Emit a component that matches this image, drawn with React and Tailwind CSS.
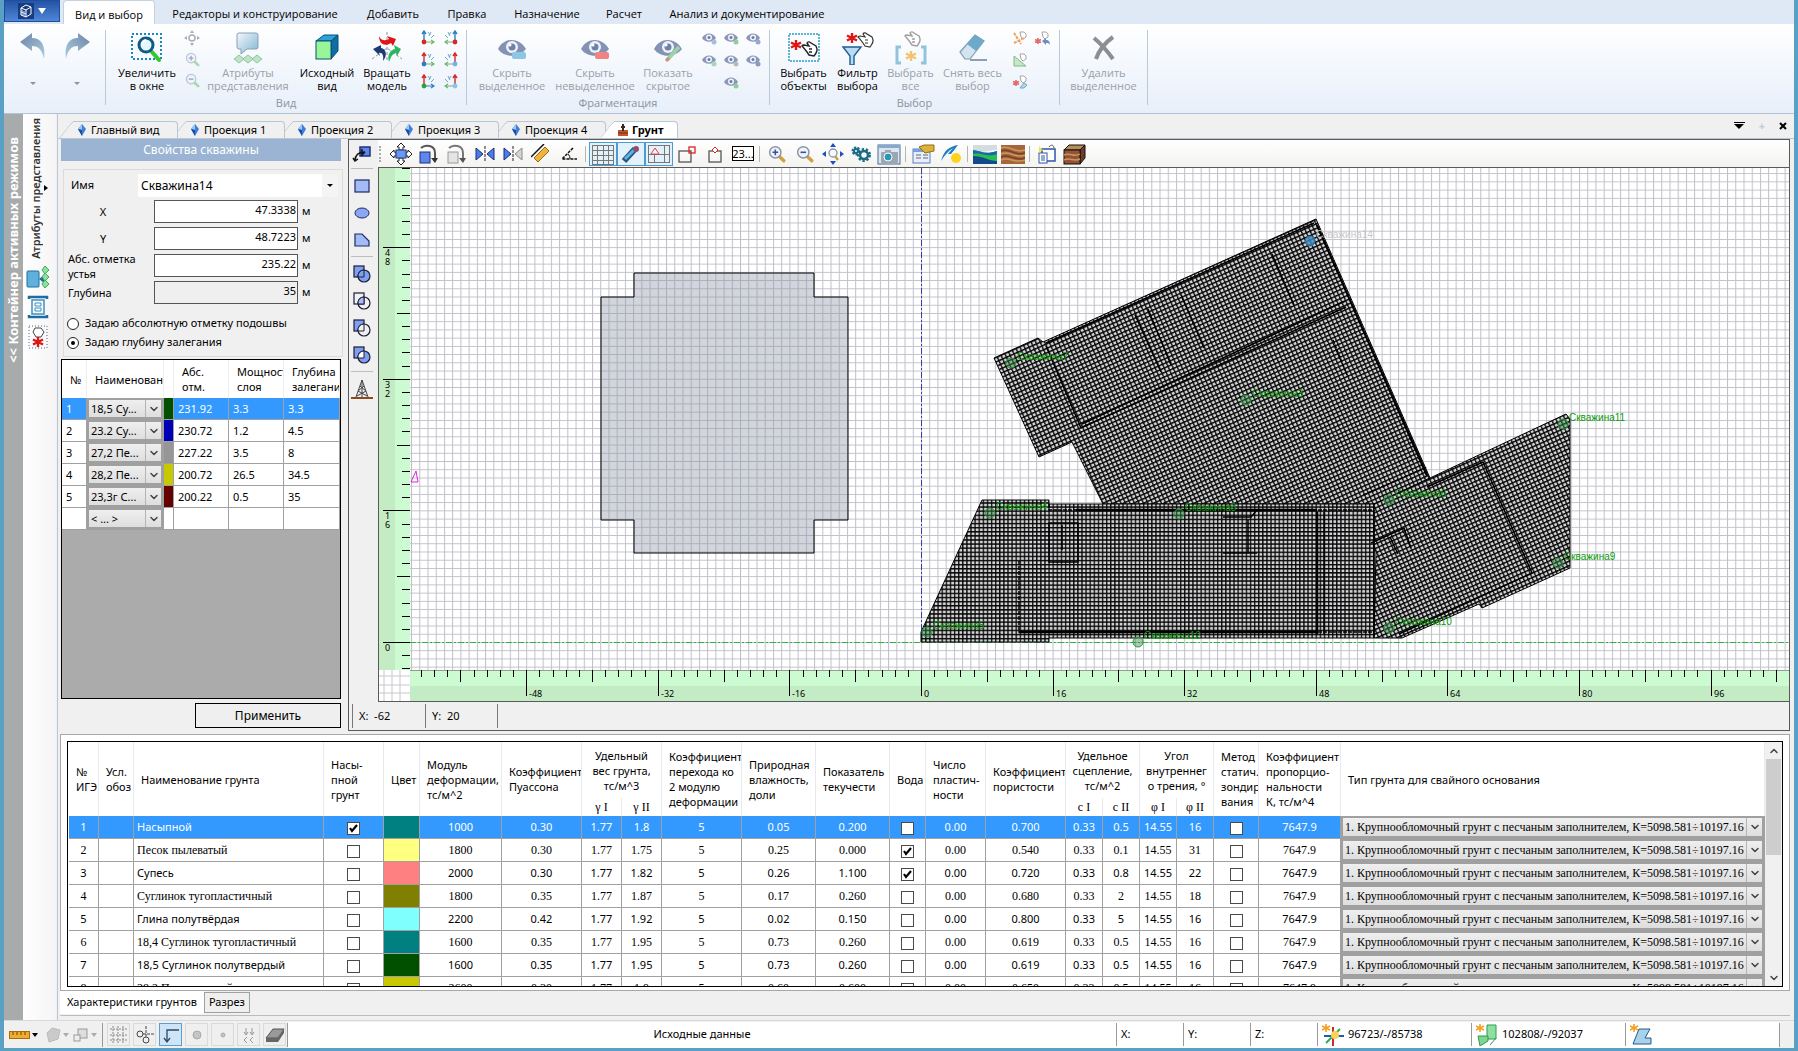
import { useState } from 'react';
import { ChevronDown, ChevronUp } from 'lucide-react';

const RIBBON_TABS = [
  { label: 'Вид и выбор', width: 'w-[92px]' },
  { label: 'Редакторы и конструирование', width: 'w-[200px]' },
  { label: 'Добавить', width: 'w-[76px]' },
  { label: 'Правка', width: 'w-[72px]' },
  { label: 'Назначение', width: 'w-[88px]' },
  { label: 'Расчет', width: 'w-[66px]' },
  { label: 'Анализ и документирование', width: 'w-[180px]' },
];

const DOC_TABS = [
  { name: 'Главный вид', skin: 'z-6 w-[119px]' },
  { name: 'Проекция 1', skin: 'z-5 w-[113px]' },
  { name: 'Проекция 2', skin: 'z-4 w-[113px]' },
  { name: 'Проекция 3', skin: 'z-3 w-[113px]' },
  { name: 'Проекция 4', skin: 'z-2 w-[113px]' },
  { name: 'Грунт', skin: 'z-7 w-[78px] font-bold', active: true },
];

const LAYERS = [
  { n: '1', name: '18,5 Су...', color: '#005000', mark: '231.92', power: '3.3', depth: '3.3' },
  { n: '2', name: '23.2 Су...', color: '#0000b4', mark: '230.72', power: '1.2', depth: '4.5' },
  { n: '3', name: '27,2 Пе...', color: '#969696', mark: '227.22', power: '3.5', depth: '8' },
  { n: '4', name: '28,2 Пе...', color: '#c8c800', mark: '200.72', power: '26.5', depth: '34.5' },
  { n: '5', name: '23,3г С...', color: '#640000', mark: '200.22', power: '0.5', depth: '35' },
  { n: '', name: '< ... >', color: '#ffffff', mark: '', power: '', depth: '' },
];

// name, насыпной, цвет, E, nu, γI, γII, k, W, IL, вода, Ip, e, cI, cII, φI, φII
const SOILS = [
  ['Насыпной', true, '#008080', '1000', '0.30', '1.77', '1.8', '5', '0.05', '0.200', false, '0.00', '0.700', '0.33', '0.5', '14.55', '16'],
  ['Песок пылеватый', false, '#ffff80', '1800', '0.30', '1.77', '1.75', '5', '0.25', '0.000', true, '0.00', '0.540', '0.33', '0.1', '14.55', '31'],
  ['Супесь', false, '#ff8080', '2000', '0.30', '1.77', '1.82', '5', '0.26', '1.100', true, '0.00', '0.720', '0.33', '0.8', '14.55', '22'],
  ['Суглинок тугопластичный', false, '#808000', '1800', '0.35', '1.77', '1.87', '5', '0.17', '0.260', false, '0.00', '0.680', '0.33', '2', '14.55', '18'],
  ['Глина полутвёрдая', false, '#80ffff', '2200', '0.42', '1.77', '1.92', '5', '0.02', '0.150', false, '0.00', '0.800', '0.33', '5', '14.55', '16'],
  ['18,4 Суглинок тугопластичный', false, '#008080', '1600', '0.35', '1.77', '1.95', '5', '0.73', '0.260', false, '0.00', '0.619', '0.33', '0.5', '14.55', '16'],
  ['18,5 Суглинок полутвердый', false, '#005000', '1600', '0.35', '1.77', '1.95', '5', '0.73', '0.260', false, '0.00', '0.619', '0.33', '0.5', '14.55', '16'],
  ['28,2 Песок мелкий', false, '#c8c800', '2600', '0.30', '1.77', '1.9', '5', '0.60', '0.600', false, '0.00', '0.650', '0.33', '0.5', '14.55', '16'],
];

const PILE_TYPE = '1. Крупнообломочный грунт с песчаным заполнителем, К=5098.581÷10197.16';

// plan coordinates: px from the 0;0 point, y down
const WELLS = [
  { x: 90, y: -279, label: 'Скважина7' },
  { x: 325, y: -242, label: 'Скважина3' },
  { x: 642, y: -218, label: 'Скважина11' },
  { x: 637, y: -79, label: 'Скважина9' },
  { x: 468, y: -142, label: 'Скважина6' },
  { x: 468, y: -14, label: 'Скважина10' },
  { x: 217, y: 0, label: 'Скважина12' },
  { x: 6, y: -10, label: 'Скважина5' },
  { x: 69, y: -129, label: 'Скважина4' },
  { x: 258, y: -128, label: 'Скважина8' },
];

/* ---------- icons ---------- */

const Svg = ({ s = 16, box, children, className = '' }) => (
  <svg width={s} height={s} viewBox={`0 0 ${box || s} ${box || s}`} fill="none" className={`shrink-0 ${className}`} aria-hidden="true">
    {children}
  </svg>
);

const Undo = ({ flip }) => (
  <svg width="28" height="28" viewBox="0 0 28 28" className={flip ? '-scale-x-100' : ''} aria-hidden="true">
    <defs>
      <linearGradient id="undo" x1="0" y1="0" x2="1" y2="1">
        <stop offset="0" stopColor="#6f83a8" />
        <stop offset="1" stopColor="#a9cfdf" />
      </linearGradient>
    </defs>
    <path d="M1 10 L13 1 V6 C22 6 27 13 25 27 C23 18 20 14 13 14 V19 Z" fill="url(#undo)" />
  </svg>
);

const ZoomWindow = () => (
  <Svg s={32}>
    <rect x="1" y="2" width="29" height="25" stroke="#1b86b8" strokeWidth="2" strokeDasharray="2 2" />
    <path d="M21 20 L28 28" stroke="#32c832" strokeWidth="4" strokeLinecap="round" />
    <circle cx="15" cy="13" r="7" fill="#e8f6ff" stroke="#0d5c86" strokeWidth="3" />
    <path d="M11 12 a5 5 0 0 1 4 -4" stroke="#fff" strokeWidth="2" />
  </Svg>
);

const ViewAttrs = () => (
  <Svg s={32}>
    <defs>
      <linearGradient id="attr" x1="0" y1="0" x2="1" y2="1">
        <stop offset="0" stopColor="#f2f8fc" />
        <stop offset="1" stopColor="#7fb4d2" />
      </linearGradient>
    </defs>
    <path d="M7 1 h17 a2 2 0 0 1 2 2 v12 a2 2 0 0 1 -2 2 h-9 l-6 5 v-5 h-2 a2 2 0 0 1 -2 -2 v-12 a2 2 0 0 1 2 -2z" fill="url(#attr)" stroke="#8a9fb8" />
    <path d="M2 27 l5 -4 5 4 -5 4z M11 27 l5 -4 5 4 -5 4z M20 27 l5 -4 5 4 -5 4z" fill="#bfe3c8" stroke="#8cc79c" />
  </Svg>
);

const HomeView = () => (
  <Svg s={32}>
    <path d="M5 9 L13 3 H27 L20 9z" fill="#2ba3d8" stroke="#0b4f77" />
    <path d="M20 9 L27 3 V19 L20 27z" fill="#0d6ea5" stroke="#0b4f77" />
    <rect x="5" y="9" width="15" height="18" fill="#98f598" stroke="#0b4f77" />
  </Svg>
);

const RotateModel = () => (
  <Svg s={32}>
    <path d="M16 0 V30 M1 27 L16 16 L31 27" stroke="#8a93a6" strokeDasharray="3 2" />
    <path d="M8 4 C10 9 14 9 18 7 L16 4 L25 7 L22 14 L20 11 C14 15 8 12 8 4z" fill="#e01515" />
    <path d="M12 29 C13 23 11 20 8 21 L9 24 L2 17 L10 13 L10 16 C15 17 17 23 12 29z" fill="#1c3a70" />
    <path d="M18 30 C16 23 19 18 24 17 L23 13 L30 17 L26 24 L25 21 C21 22 20 25 18 30z" fill="#2db560" />
  </Svg>
);

const EyeGlyph = ({ children }) => (
  <Svg s={32}>
    <path d="M2 17 C8 5 23 5 30 17 C23 26 8 26 2 17z" fill="#8492b5" />
    <circle cx="16" cy="15" r="6" fill="#eef3fa" />
    <circle cx="16" cy="15" r="3.5" fill="#7081a8" />
    <circle cx="14" cy="13" r="1.5" fill="#fff" />
    {children}
  </Svg>
);

const Star = ({ x, y, r = 5, color }) => (
  <path
    d={`M${x} ${y - r} V${y + r} M${x - r} ${y - r / 2} L${x + r} ${y + r / 2} M${x - r} ${y + r / 2} L${x + r} ${y - r / 2}`}
    stroke={color}
    strokeWidth={r > 4 ? 2.4 : 1.6}
  />
);

const HAND = 'M1 5 C1 4 2 4 3 4 L8 5 L6 2 C7 0 9 1 10 2 L15 5 C17 9 16 11 13 15 L8 14 L6 11 L2 6z M8 8 h3 M8 11 h3';

const SelectObjects = () => (
  <Svg s={32}>
    <rect x="1" y="2" width="30" height="27" stroke="#2b9fc4" strokeWidth="1.5" strokeDasharray="2 1" />
    <Star x={8} y={13} color="#e01515" />
    <path d={HAND} transform="translate(13 9)" fill="#fff" stroke="#222" strokeWidth="1.4" />
  </Svg>
);

const FilterSelect = () => (
  <Svg s={34}>
    <Star x={11} y={7} color="#e01515" />
    <path d={HAND} transform="translate(16 1)" fill="#fff" stroke="#333" strokeWidth="1.2" />
    <path d="M2 16 H20 L13 25 V34 H9 V25z" fill="#b9dcf5" stroke="#1d5c94" strokeWidth="1.4" />
  </Svg>
);

const SelectAll = () => (
  <Svg s={34}>
    <path d="M7 16 H3 V32 H7 M27 16 H31 V32 H27" stroke="#8fc4dc" strokeWidth="3" />
    <Star x={17} y={25} color="#f3c470" />
    <path d={HAND} transform="translate(10 0)" fill="#fff" stroke="#a0a0a0" strokeWidth="1.4" />
  </Svg>
);

const Eraser = () => (
  <Svg s={32}>
    <path d="M3 20 L18 3 L27 9 L13 27 H8z" fill="#d3e3ef" stroke="#7f9db5" strokeWidth="1.2" />
    <path d="M10 12 L18 3 L27 9 L19 19z" fill="#6ca9cb" />
    <path d="M13 28 H30" stroke="#8ca0b5" strokeWidth="2" />
  </Svg>
);

const DeleteX = () => (
  <Svg s={32}>
    <path d="M6 6 C12 11 20 20 25 27 M25 5 C18 10 11 18 8 27" stroke="#8e8e92" strokeWidth="4" />
  </Svg>
);

const Axes = ({ a, b, dot, right }) => (
  <Svg s={16}>
    <g transform={right ? 'translate(16 0) scale(-1 1)' : undefined}>
      <path d="M4 12 V2 M2 4 L4 1 L6 4" stroke={a} strokeWidth="1.4" />
      <path d="M4 12 H13 M11 10 L14 12 L11 14" stroke={b} strokeWidth="1.2" />
      <circle cx="4" cy="12" r="2.4" fill={dot} />
      <path d="M8 2 L10 5 M11 2 L9 6 M11 8 L14 5" stroke="#5b9fc4" strokeWidth=".9" />
    </g>
  </Svg>
);

const SmallEye = ({ tint }) => (
  <Svg s={16}>
    <path d="M1 8 C4 2 12 2 15 8 C12 13 4 13 1 8z" fill="#8b98ba" />
    <circle cx="8" cy="7.500" r="3" fill="#f0f4fa" />
    <circle cx="8" cy="7.500" r="1.500" fill="#6c7da5" />
    <circle cx="13" cy="12" r="2.500" fill={tint} />
  </Svg>
);

const SmallPick = ({ kind }) => (
  <Svg s={16}>
    <path d="M8 2 h4 l2 2 v3 l-3 2 -2 -2z" fill="#fff" stroke="#a5a5a5" />
    {kind === 'link' && <path d="M2 3 L9 14 M2 13 L12 8" stroke="#f0a060" strokeWidth="2" strokeDasharray="3 1" />}
    {kind === 'back' && (
      <>
        <Star x={4} y={11} r={3} color="#e66a6a" />
        <path d="M8 11 l4 -3 v2 c3 0 4 2 4 5 c-1 -2 -2 -2 -4 -2 v2z" fill="#6f8cc0" />
      </>
    )}
    {kind === 'tri' && <path d="M2 4 V14 H14z" fill="#c6e8c6" stroke="#7fb98a" />}
    {kind === 'clear' && (
      <>
        <Star x={4} y={9} r={3} color="#e66a6a" />
        <path d="M8 14 l4 -5 3 2 -3 3z" stroke="#6ca9cb" fill="#b5d8ea" />
      </>
    )}
  </Svg>
);

const Magnifier = ({ sign, faded, handle = '#d2a03c' }) => (
  <Svg s={faded ? 15 : 18} box={16} className={faded ? 'opacity-50' : ''}>
    <path d="M9.500 9.500 L14 14" stroke={handle} strokeWidth="3" strokeLinecap="round" />
    <circle cx="6.500" cy="6.500" r="5" fill="#eef4fb" stroke="#8b95a5" strokeWidth="1.300" />
    <path d={sign === '+' ? 'M4 6.5 H9 M6.500 4 V9' : 'M4 6.5 H9'} stroke="#3b4f9a" strokeWidth="1.400" />
  </Svg>
);

const PanArrows = ({ color }) => (
  <Svg s={24} box={24}>
    <path d="M12 1 l3 4 h-6z M12 23 l3 -4 h-6z M1 12 l4 -3 v6z M23 12 l-4 -3 v6z" fill={color} />
    <path d="M14 14 L17 18" stroke="#d2a03c" strokeWidth="2.500" />
    <circle cx="12" cy="11" r="4" fill="#f4f8fc" stroke="#8b95a5" strokeWidth="1.300" />
  </Svg>
);

const Gem = () => (
  <svg width="10" height="12" viewBox="0 0 10 12" className="shrink-0" aria-hidden="true">
    <path d="M1 5 L5 0 L9 5 L5 12z" fill="#3f7fd8" />
    <path d="M1 5 L5 0 V6z" fill="#9cc8f5" />
    <path d="M1 5 L5 6 V12z" fill="#1b4aa8" />
  </svg>
);

const BoolOp = ({ sq, ci, both }) => (
  <Svg s={20}>
    <rect x="2" y="2" width="10" height="11" fill={sq} stroke="#1c1c3a" strokeWidth="1.200" />
    <circle cx="12" cy="12" r="6" fill={ci} stroke="#1c1c3a" strokeWidth="1.200" />
    <path d="M12 6 V13 H6 A6 6 0 0 1 12 6z" fill={both} stroke="#1c1c3a" />
  </Svg>
);

const TOOLBAR = [
  [
    ['Переместить', <Svg s={24}><path d="M12 1 l4 4 h-2 v3 h-4 v-3 h-2z M12 23 l4 -4 h-2 v-3 h-4 v3 h-2z M1 12 l4 -4 v2 h2 v4 h-2 v2z M23 12 l-4 -4 v2 h-2 v4 h2 v2z" fill="#fff" stroke="#222" /><rect x="7" y="8" width="10" height="8" fill="#6b97ef" stroke="#23388a" /></Svg>],
    ['Повернуть', <Svg s={20}><rect x="1" y="8" width="10" height="11" fill="#5f86ea" stroke="#1d2f7a" /><path d="M2 4 C6 0 16 1 16 9 V15" stroke="#555" strokeWidth="2" /><path d="M12 14 h7 l-3 5z" fill="#333" /></Svg>],
    ['Повернуть копию', <Svg s={20}><rect x="1" y="8" width="10" height="11" fill="#e4e4e4" stroke="#9a9a9a" /><path d="M2 4 C6 0 16 1 16 9 V15" stroke="#777" strokeWidth="2" /><path d="M12 14 h7 l-3 5z" fill="#555" /></Svg>],
    ['Отразить', <Svg s={20}><path d="M1 4 L8 10 L1 16z M19 4 L12 10 L19 16z" fill="#4a7de8" stroke="#1b2c80" /><path d="M10 2 V18" stroke="#222" strokeDasharray="3 1" /></Svg>],
    ['Отразить копию', <Svg s={20}><path d="M1 4 L8 10 L1 16z" fill="#4a7de8" stroke="#1b2c80" /><path d="M19 4 L12 10 L19 16z" fill="#d5d5d5" stroke="#8a8a8a" /><path d="M10 2 V18" stroke="#222" strokeDasharray="3 1" /></Svg>],
    ['Измерить', <Svg s={20}><path d="M3 14 L14 3 L18 7 L7 18z" fill="#efb43e" stroke="#9b6a13" /><path d="M0 13 L13 0" stroke="#111" strokeWidth="1.500" /></Svg>],
    ['Угол', <Svg s={20}><path d="M14 4 L3 15 H18" stroke="#111" strokeWidth="1.500" strokeDasharray="3 1" /><path d="M9 10 a6 6 0 0 1 2 5" stroke="#111" /></Svg>],
  ],
  [
    ['Сетка', <Svg s={24}><path d="M1 3.500 H23 M1 8.500 H23 M1 13.500 H23 M1 18.500 H23 M1 22.500 H23 M1.500 3 V23 M6.500 3 V23 M12.500 3 V23 M17.500 3 V23 M22.500 3 V23" stroke="#777" /></Svg>, true],
    ['Кисть', <Svg s={20}><path d="M3 17 L14 5" stroke="#27567d" strokeWidth="6" /><path d="M4 15 L14 5" stroke="#57b4e6" strokeWidth="3" /><circle cx="15" cy="5" r="3" fill="#8e4f74" /></Svg>, true],
    ['Ось сетки', <Svg s={24}><path d="M1 3.500 H23 M1 12.500 H23 M1 20.500 H23 M1.500 3 V21 M17.500 3 V21 M22.500 3 V21 M7.500 13 V21" stroke="#777" /><path d="M4 12 L8 6 L12 12z" stroke="#e04040" fill="#fff" /></Svg>, true],
    ['Угловая привязка', <Svg s={20}><rect x="2" y="7" width="12" height="11" stroke="#555" strokeWidth="1.300" /><rect x="12" y="3" width="6" height="6" stroke="#e02020" strokeWidth="1.300" /></Svg>],
    ['Средняя точка', <Svg s={20}><rect x="4" y="7" width="12" height="11" stroke="#555" strokeWidth="1.300" /><path d="M10 3 l3 3 -3 3 -3 -3z" fill="#fff" stroke="#e02020" /></Svg>],
    ['Число', <span className="flex h-[15px] w-[22px] items-center justify-center border border-black bg-white text-[11px] leading-none">23...</span>],
  ],
  [
    ['Приблизить', <Magnifier sign="+" />],
    ['Отдалить', <Magnifier sign="-" />],
    ['Показать все', <PanArrows color="#1e4fc4" />],
    ['Настройки', <Svg s={22}><circle cx="6" cy="8" r="3" stroke="#1c6a86" strokeWidth="3" strokeDasharray="2 1" /><circle cx="6" cy="8" r="2" stroke="#1c6a86" strokeWidth="2" /><circle cx="14" cy="12" r="5" stroke="#1c6a86" strokeWidth="4" strokeDasharray="2 1.500" /><circle cx="14" cy="12" r="4" stroke="#1c6a86" strokeWidth="2.500" /></Svg>],
    ['Снимок', <Svg s={24}><rect x="1" y="3" width="22" height="19" fill="#dbe6f2" stroke="#4a6a94" /><rect x="1" y="3" width="22" height="3" fill="#86a9d2" /><rect x="4" y="10" width="17" height="11" rx="1" fill="#9aa6b0" /><rect x="8" y="8" width="6" height="3" fill="#9aa6b0" /><circle cx="11" cy="15" r="4" fill="#2b97b5" stroke="#fff" /></Svg>],
  ],
  [
    ['Свойства', <Svg s={24}><rect x="2" y="7" width="17" height="14" fill="#e8effb" stroke="#5b7fc4" /><rect x="2" y="7" width="17" height="3" fill="#7aa0e0" /><path d="M5 13 h5 M5 16 h5 M12 13 h5 M12 16 h5" stroke="#667" /><path d="M8 5 L13 3 H23 V9 L14 11z" fill="#dcb23a" stroke="#8e6f14" /></Svg>],
    ['Заливка', <Svg s={22}><path d="M1 18 C4 8 8 4 18 2 L11 11 L8 11 L13 5 C8 8 5 12 1 18z" fill="#1d7cc4" /><circle cx="16" cy="15" r="5" fill="#ffd21e" /></Svg>],
  ],
  [
    ['Рельеф', <Svg s={24}><rect y="3" width="24" height="19" fill="#fff" /><path d="M0 3 h24 v5 C16 8 12 12 0 8z" fill="#d4dce2" /><path d="M0 8 C8 9 12 13 24 9 V22 H0z" fill="#2bbd4e" /><path d="M0 8 C8 9 12 13 24 9 V12 C14 16 9 10 0 12z" fill="#1768b0" /><path d="M0 14 C10 14 16 19 24 19 V22 H0z" fill="#124a8e" /></Svg>],
    ['Разрез', <Svg s={24}><rect y="3" width="24" height="19" fill="#a6653d" /><path d="M0 6 C8 2 14 12 24 8 M0 12 C8 8 14 17 24 13 M0 18 C8 14 14 22 24 18" stroke="#c79c58" strokeWidth="1.500" /><path d="M0 9 C8 5 14 15 24 11 M0 15 C8 11 14 20 24 16" stroke="#7c3d2c" strokeWidth="1.500" /></Svg>],
  ],
  [
    ['Копировать', <Svg s={20}><rect x="5" y="5" width="13" height="12" fill="#fff" stroke="#2c55a8" strokeWidth="1.500" /><rect x="2" y="9" width="8" height="10" fill="#fff" stroke="#2c55a8" /><path d="M4 12 h4 M4 14 h4 M4 16 h4" stroke="#2c55a8" /><path d="M2 2 l2 3 3 1 -3 1 -2 2z" fill="#f2df3a" /><path d="M12 3 C14 0 17 1 17 4" stroke="#556" /></Svg>],
    ['Массив', <Svg s={24}><path d="M1 8 L6 3 H22 L17 8z" fill="#b78d54" stroke="#111" /><path d="M17 8 L22 3 V16 L17 22z" fill="#6f3a28" stroke="#111" /><rect x="1" y="8" width="16" height="14" fill="#965038" stroke="#111" /><path d="M1 13 C7 10 11 16 17 12 M1 18 C7 15 11 20 17 17" stroke="#c79858" strokeWidth="1.500" /></Svg>],
  ],
];

const SIDE_TOOLS = [
  [
    ['Прямоугольник', <Svg s={20}><rect x="3" y="4" width="14" height="12" fill="#a3bbf7" stroke="#1c2a66" strokeWidth="1.200" /></Svg>],
    ['Эллипс', <Svg s={20}><ellipse cx="10" cy="10" rx="7" ry="5" fill="#8ba7f3" stroke="#1c2a66" /></Svg>],
    ['Многоугольник', <Svg s={20}><path d="M3 4 H10 L17 11 V16 H3z" fill="#a3bbf7" stroke="#1c2a66" strokeWidth="1.200" /></Svg>],
  ],
  [
    ['Объединить', <BoolOp sq="#7f9ff0" ci="#7f9ff0" both="#7f9ff0" />],
    ['Пересечь', <BoolOp sq="none" ci="none" both="#a9bdf5" />],
    ['Вычесть', <BoolOp sq="#7f9ff0" ci="#f0f0f0" both="#f0f0f0" />],
    ['Исключить', <BoolOp sq="#7f9ff0" ci="#7f9ff0" both="#ffffff" />],
  ],
  [['Скважина', <Svg s={22}><path d="M11 2 L5 19 M11 2 L17 19 M9 8 L15 13 M13 8 L7 13 M7 13 L16 18 M15 13 L6 18 M11 2 V19" stroke="#444" /><path d="M0 20 H22" stroke="#8a4b23" strokeWidth="2" /></Svg>]],
];

/* ---------- small controls ---------- */

const Check = ({ label, defaultChecked }) => (
  <span className="relative inline-flex align-middle">
    <input type="checkbox" aria-label={label} defaultChecked={defaultChecked} className="peer size-[13px] appearance-none border border-[#4a4a4a] bg-white" />
    <svg viewBox="0 0 13 13" className="pointer-events-none absolute inset-0 hidden size-[13px] peer-checked:block" aria-hidden="true">
      <path d="M3 6 L5 9 L10 3" fill="none" stroke="#000" strokeWidth="2.200" />
    </svg>
  </span>
);

const GridSelect = ({ label, value, className = '' }) => (
  <span className="relative flex size-full border-2 border-[#a0a0a0] bg-linear-to-b from-[#efefef] to-[#dedede]">
    <select aria-label={label} className={`size-full appearance-none overflow-hidden bg-transparent pr-4 pl-[2px] leading-[16px] text-black outline-none ${className}`}>
      <option>{value}</option>
    </select>
    <span className="pointer-events-none absolute inset-y-0 right-0 flex w-4 items-center justify-center border-l border-[#b4b4b4]">
      <ChevronDown size={12} strokeWidth={3} color="#444" />
    </span>
  </span>
);

/* ---------- ribbon ---------- */

const BigButton = ({ icon, lines, width, disabled }) => (
  <button type="button" disabled={disabled} className={`flex shrink-0 flex-col items-center ${width} ${disabled ? 'text-[#9a9fa8]' : 'text-black'}`}>
    <span className="flex h-9 items-center">{icon}</span>
    <span className="text-[11px] leading-[13px] whitespace-pre">{lines}</span>
  </button>
);

const RibbonGroup = ({ title, width, children }) => (
  <div role="group" aria-label={title || undefined} className={`flex shrink-0 flex-col ${width}`}>
    <div className="mt-[6px] flex h-[75px] flex-col justify-between border-r border-[#bcc9d8]">
      <div className="flex items-start justify-center">{children}</div>
      <div className="h-1 text-center text-[11px] leading-[4px] text-[#8d939d]">{title}</div>
    </div>
  </div>
);

const IconGrid = ({ cols, label, children }) => (
  <div aria-label={label} className={`grid shrink-0 ${cols} content-start justify-items-center gap-y-[6px]`}>{children}</div>
);

const RED = '#d62828';

const Ribbon = () => (
  <div className="flex h-[90px] shrink-0 overflow-hidden border-b border-[#b4c4d4] bg-linear-to-b from-white to-[#e7effa] font-['Open_Sans','Noto_Sans',sans-serif]">
    <RibbonGroup title="" width="w-[102px]">
      {['Отменить', 'Повторить'].map((name, i) => (
        <button key={name} type="button" disabled aria-label={name} className="flex w-11 flex-col items-center gap-[22px] pt-[2px]">
          <Undo flip={i === 1} />
          <span className="border-x-[3px] border-t-[3px] border-x-transparent border-t-[#8f949c]" />
        </button>
      ))}
    </RibbonGroup>
    <RibbonGroup title="Вид" width="w-[361px]">
      <BigButton icon={<ZoomWindow />} lines={'Увеличить\nв окне'} width="w-[74px]" />
      <IconGrid cols="grid-cols-1" label="Масштаб">
        <Svg s={16}><path d="M8 0 l2 3 h-4z M8 16 l2 -3 h-4z M0 8 l3 -2 v4z M16 8 l-3 -2 v4z" fill="#a9aeb8" /><circle cx="8" cy="8" r="3" stroke="#a9aeb8" strokeWidth="1.500" /></Svg>
        <Magnifier sign="+" faded handle="#5fc45f" />
        <Magnifier sign="-" faded handle="#5fc45f" />
      </IconGrid>
      <BigButton icon={<ViewAttrs />} lines={'Атрибуты\nпредставления'} width="w-[96px]" disabled />
      <BigButton icon={<HomeView />} lines={'Исходный\nвид'} width="w-[62px]" />
      <BigButton icon={<RotateModel />} lines={'Вращать\nмодель'} width="w-[58px]" />
      <IconGrid cols="grid-cols-[23px_23px]" label="Виды">
        <Axes a="#2b7fc4" b="#6cb86c" dot={RED} />
        <Axes a="#2b7fc4" b="#6cb86c" dot={RED} right />
        <Axes a={RED} b="#6cb86c" dot="#2b7fc4" />
        <Axes a={RED} b="#6cb86c" dot="#6fb4e8" right />
        <Axes a={RED} b="#2b7fc4" dot="#2fa03c" />
        <Axes a={RED} b="#6cb86c" dot="#8cc4ee" right />
      </IconGrid>
    </RibbonGroup>
    <RibbonGroup title="Фрагментация" width="w-[303px]">
      <BigButton icon={<EyeGlyph><rect x="16" y="20" width="14" height="7" rx="2" fill="#8fc6e6" /></EyeGlyph>} lines={'Скрыть\nвыделенное'} width="w-[80px]" disabled />
      <BigButton icon={<EyeGlyph><rect x="16" y="20" width="14" height="7" rx="2" fill="#ef8484" /></EyeGlyph>} lines={'Скрыть\nневыделенное'} width="w-[86px]" disabled />
      <BigButton icon={<EyeGlyph><path d="M15 28 L27 15" stroke="#9bd3a5" strokeWidth="4" /><path d="M14 29 l3 -3" stroke="#d88a7a" strokeWidth="3" /></EyeGlyph>} lines={'Показать\nскрытое'} width="w-[60px]" disabled />
      <IconGrid cols="grid-cols-[22px_22px_22px]" label="Фрагменты">
        <SmallEye tint="#a8bfdc" /><SmallEye tint="#8fd09a" /><SmallEye tint="#9aa8d0" />
        <SmallEye tint="#a8d8b8" /><SmallEye tint="#b8bcb8" /><SmallEye tint="#8a9cc0" />
        <span /><SmallEye tint="#8fd09a" />
      </IconGrid>
    </RibbonGroup>
    <RibbonGroup title="Выбор" width="w-[290px]">
      <BigButton icon={<SelectObjects />} lines={'Выбрать\nобъекты'} width="w-[54px]" />
      <BigButton icon={<FilterSelect />} lines={'Фильтр\nвыбора'} width="w-[54px]" />
      <BigButton icon={<SelectAll />} lines={'Выбрать\nвсе'} width="w-[52px]" disabled />
      <BigButton icon={<Eraser />} lines={'Снять весь\nвыбор'} width="w-[72px]" disabled />
      <IconGrid cols="grid-cols-[22px_22px]" label="Режимы выбора">
        <SmallPick kind="link" /><SmallPick kind="back" />
        <SmallPick kind="tri" /><span />
        <SmallPick kind="clear" />
      </IconGrid>
    </RibbonGroup>
    <RibbonGroup title="" width="w-[88px]">
      <BigButton icon={<DeleteX />} lines={'Удалить\nвыделенное'} width="w-[80px]" disabled />
    </RibbonGroup>
  </div>
);

const RibbonTabs = () => (
  <nav className="flex h-6 shrink-0 bg-[#dfe8f5] font-['Open_Sans','Noto_Sans',sans-serif]">
    <button type="button" aria-label="Меню приложения" className="mr-[3px] flex h-[22px] w-[56px] items-center justify-center gap-1 border border-[#1d4f9e] bg-linear-to-b from-[#2554a5] to-[#4f86d6]">
      <Svg s={16} className="bg-[#173c80]"><path d="M3 5 L8 2 L13 4 V11 L8 14 L3 12z M3 5 L8 7 L13 4 M8 7 V14" stroke="#fff" /><path d="M4 7 v5 M6 8 v5 M3 9 l5 2" stroke="#cfe0ff" /></Svg>
      <span className="border-x-4 border-t-[6px] border-x-transparent border-t-white" />
    </button>
    {RIBBON_TABS.map((tab, i) => (
      <button
        key={tab.label}
        type="button"
        className={`shrink-0 pt-[4px] text-center text-[11px] leading-[18px] whitespace-nowrap ${tab.width} ${i === 0 ? 'rounded-t border border-b-0 border-[#c3d2e3] bg-white' : ''}`}
      >
        {tab.label}
      </button>
    ))}
  </nav>
);

/* ---------- left form ---------- */

const Field = ({ id, label, value, readOnly, center }) => (
  <div className="flex h-[27px] items-center">
    <label htmlFor={id} className={`w-[90px] shrink-0 leading-[15px] whitespace-pre ${center ? 'pr-3 text-center' : 'pl-1'}`}>{label}</label>
    <input id={id} defaultValue={value} readOnly={readOnly} className={`h-[23px] min-w-0 flex-1 border border-[#555] pr-px pb-1 text-right outline-none ${readOnly ? 'bg-[#efefef]' : 'bg-white'}`} />
    <span className="w-11 shrink-0 pl-1">м</span>
  </div>
);

const WellForm = () => {
  const [mode, setMode] = useState('depth');

  return (
    <section className="flex w-[290px] shrink-0 flex-col pr-[5px] pl-[3px] text-[11px]">
      <h2 className="mr-[2px] flex h-[22px] shrink-0 items-center justify-center bg-[#9bb4d3] text-[12px] text-white">Свойства скважины</h2>
      <div className="mt-2 ml-[2px] h-[188px] shrink-0 border border-[#dcdcdc] pt-1">
        <div className="flex items-center">
          <label htmlFor="well" className="w-[74px] shrink-0 pl-[7px]">Имя</label>
          <span className="relative mr-1 flex h-[23px] flex-1 bg-white">
            <select id="well" className="w-full appearance-none bg-transparent pl-[3px] text-[12px] outline-none"><option>Скважина14</option></select>
            <span className="pointer-events-none absolute inset-y-0 right-0 flex w-4 items-center justify-center bg-[#f4f4f4]">
              <span className="border-x-[3px] border-t-[3px] border-x-transparent border-t-black" />
            </span>
          </span>
        </div>
        <div className="mt-px">
          <Field id="fx" label="X" value="47.3338" center />
          <Field id="fy" label="Y" value="48.7223" center />
          <Field id="fz" label={'Абс. отметка\nустья'} value="235.22" />
          <Field id="fd" label="Глубина" value="35" readOnly />
        </div>
        {[['mark', 'Задаю абсолютную отметку подошвы'], ['depth', 'Задаю глубину залегания']].map(([key, text], i) => (
          <label key={key} className={`flex h-[19px] items-center gap-[6px] pl-[3px] ${i === 0 ? 'mt-2' : ''}`}>
            <span className="relative flex size-3 items-center justify-center">
              <input type="radio" name="mode" checked={mode === key} onChange={() => setMode(key)} className="peer size-3 appearance-none rounded-full border border-[#222] bg-white" />
              <span className="pointer-events-none absolute hidden size-1 rounded-full bg-black peer-checked:block" />
            </span>
            {text}
          </label>
        ))}
      </div>
      <div className="mt-[2px] mr-[2px] flex-1 overflow-hidden border border-black bg-[#ababab]">
        <table className="w-full table-fixed border-separate border-spacing-0 bg-white text-left">
          <colgroup>
            <col className="w-[25px]" /><col className="w-[77px]" /><col className="w-[10px]" /><col className="w-[55px]" /><col className="w-[55px]" /><col />
          </colgroup>
          <thead>
            <tr className="h-[38px] leading-[15px] [&>th]:overflow-hidden [&>th]:border-r [&>th]:border-[#eee] [&>th]:font-normal [&>th]:whitespace-pre">
              <th className="pl-2">№</th><th className="pl-2">Наименование</th><th aria-label="Цвет" />
              <th className="pl-2">{'Абс.\nотм.'}</th><th className="pl-2">{'Мощность\nслоя'}</th><th className="pl-2">{'Глубина\nзалегания'}</th>
            </tr>
          </thead>
          <tbody>
            {LAYERS.map((l, i) => (
              <tr key={i} className={`h-[22px] leading-[18px] [&>td]:border-r [&>td]:border-b [&>td]:border-[#a0a0a0] [&>td]:p-0 ${i === 0 ? 'bg-[#3399ff] text-white' : ''}`}>
                <td><span className="pl-1">{l.n}</span></td>
                <td><div className="h-[21px]"><GridSelect label={`Слой ${l.n}`} value={l.name} /></div></td>
                <td style={{ backgroundColor: l.color }} />
                <td><span className="pl-1">{l.mark}</span></td>
                <td><span className="pl-1">{l.power}</span></td>
                <td><span className="pl-1">{l.depth}</span></td>
              </tr>
            ))}
          </tbody>
        </table>
      </div>
      <button type="button" className="mt-1 mr-[2px] mb-[6px] ml-auto h-[25px] w-[146px] shrink-0 border border-black bg-[#efefef] text-[12px]">Применить</button>
    </section>
  );
};

/* ---------- plan ---------- */

const UNIT = 8.225;
const range = (from, to) => Array.from({ length: to - from + 1 }, (_, i) => from + i);

const VRuler = () => (
  <svg className="h-full w-[31px]" aria-hidden="true">
    <rect width="16" height="100%" fill="#c4ecc4" />
    <rect x="16" width="15" height="100%" fill="#ccfbd2" />
    <g transform="translate(0 474)">
      {range(-2, 36).map((k) => {
        const y = Math.round(-k * 1.6 * UNIT);
        const major = k % 10 === 0;
        return (
          <g key={k}>
            <path d={`M${major ? 4 : k % 5 === 0 ? 18 : 23} ${y + 0.5} H31`} stroke="#000" />
            {major && String(k * 1.6).split('').map((c, j) => (
              <text key={j} x="6" y={y + 9 + j * 9} fontSize="9">{c}</text>
            ))}
          </g>
        );
      })}
    </g>
  </svg>
);

const HRuler = () => (
  <svg className="h-[31px] w-full" aria-hidden="true">
    <rect width="100%" height="16" fill="#ccfbd2" />
    <rect y="16" width="100%" height="15" fill="#c4ecc4" />
    <path d="M0 .5 H3000" stroke="#8fa08f" />
    <g transform="translate(511 0)">
      {range(-38, 65).map((k) => {
        const x = Math.round(k * 1.6 * UNIT);
        const major = k % 10 === 0;
        return (
          <g key={k}>
            <path d={`M${x + 0.5} 0 V${major ? 26 : k % 5 === 0 ? 12 : 7}`} stroke="#000" />
            {major && <text x={x + 3} y="27" fontSize="9">{Math.round(k * 1.6)}</text>}
          </g>
        );
      })}
    </g>
  </svg>
);

const Plan = () => (
  <svg className="size-full bg-white" role="img" aria-label="План здания со скважинами">
    <defs>
      <pattern id="grid" x="511" y="474" width={UNIT} height={UNIT} patternUnits="userSpaceOnUse">
        <path d={`M.5 0 V${UNIT} M0 .5 H${UNIT}`} stroke="#bfc0c8" />
      </pattern>
      <pattern id="mesh" width="4.110" height="4.110" patternUnits="userSpaceOnUse">
        <rect width="5" height="5" fill="#d2d2d4" />
        <path d="M.7 0 V5 M0 .7 H5" stroke="#060606" strokeWidth="1.300" />
      </pattern>
      <pattern id="meshTilt" width="4.110" height="4.110" patternUnits="userSpaceOnUse" patternTransform="rotate(-24)">
        <rect width="5" height="5" fill="#d2d2d4" />
        <path d="M.7 0 V5 M0 .7 H5" stroke="#060606" strokeWidth="1.300" />
      </pattern>
    </defs>
    <rect width="100%" height="100%" fill="url(#grid)" />
    <g transform="translate(511 474)">
      <path d="M-287 -369 H-107 V-345 H-73 V-122 H-107 V-89 H-287 V-122 H-320 V-345 H-287z" fill="#8f97a8" fillOpacity=".4" stroke="#000" />
      <path d="M.5 -474 V0" stroke="#3a3aa8" strokeDasharray="6 2 2 2" />
      <path d="M-511 .5 H1400" stroke="#2db43c" strokeDasharray="6 2 2 2" />
      <path d="M-510 -160 L-505 -171 L-503 -160z" stroke="#e020e0" fill="none" />

      <path d="M73 -284 L117 -304 L122 -300 L395 -423 L509 -164 L455 -138 H182 L151 -200 L118 -185z" fill="url(#meshTilt)" stroke="#000" />
      <path d="M453 -138 L509 -164 L645 -228 L649 -223 V-74 L561 -34 L558 -38 L481 -4 L453 -4 L455 -90 L450 -102z" fill="url(#meshTilt)" stroke="#000" />
      <path d="M0 0 V-10 L61 -142 H128 V-138 H453 V-4 H128 V0z" fill="url(#mesh)" stroke="#000" />

      <g fill="none" stroke="#000" strokeWidth="1.500">
        <path d="M125 -299 L393 -419 M125 -296 L160 -214 L425 -335 M161 -218 L424 -341" />
        <path d="M396 -417 L506 -166" strokeWidth="2" />
        <path d="M214 -327 L240 -270 M227 -333 L250 -277 M260 -347 L283 -294 M351 -388 L373 -337" />
        <path d="M412 -302 L426 -267 M442 -147 L506 -175" strokeDasharray="4 1" />
        <path d="M98 -81 V-10 H453 M128 -138 V-132 H453" strokeDasharray="4 1" />
        <path d="M155 -132 H396 M396 -130 V-8 M98 -10 H396" strokeWidth="2.500" />
        <path d="M403 -130 V-8 M453 -132 V-6 M128 -119 H157 V-80 H128z M141 -117 V-92" />
        <path d="M302 -125 H330 L336 -132 M302 -89 H336 M327 -122 V-90" />
        <path d="M506 -155 L562 -180 L611 -69 L478 -8 M450 -99 L483 -114 L490 -94 M469 -105 L477 -88" />
      </g>

      <g fontFamily="Liberation Sans, sans-serif" fontSize="10">
        {WELLS.map((w) => (
          <g key={w.label}>
            <circle cx={w.x} cy={w.y} r="5" fill="#3c8c50" fillOpacity=".45" stroke="#2a9a3a" />
            <text x={w.x + 6} y={w.y - 3} fill="#0a9a0a">{w.label}</text>
          </g>
        ))}
        <circle cx="389" cy="-401" r="5" fill="#3f8cc8" fillOpacity=".8" stroke="#2a6f9a" />
        <text x="395" y="-404" fill="#c8c8c8">Скважина14</text>
      </g>
    </g>
  </svg>
);

const ToolButton = ({ item: [name, icon, active], className = '' }) => (
  <button type="button" title={name} aria-label={name} className={`flex shrink-0 items-center justify-center ${active ? 'border border-[#4a9ad4] bg-[#e3f1fb]' : ''} ${className}`}>
    {icon}
  </button>
);

const PlanView = () => (
  <section className="mr-1 mb-[3px] flex min-w-0 flex-1 flex-col border border-[#5a5a5a] bg-[#f0f0f0]">
    <div className="flex min-h-0 flex-1">
      <div className="mr-[3px] flex w-[26px] shrink-0 flex-col items-center">
        <ToolButton
          className="h-[28px] w-[26px]"
          item={['Вписать', <Svg s={20}><rect x="8" y="3" width="10" height="9" fill="#5f86ea" stroke="#1d2f7a" strokeWidth="1.500" /><path d="M3 17 C3 10 8 8 13 8 M10 5 V11 L13 8 M1 14 l2 3 3 -2" stroke="#111" strokeWidth="1.500" /></Svg>]}
        />
        {SIDE_TOOLS.map((group, i) => (
          <div key={i} className="flex w-[22px] flex-col items-center border-t border-[#bdbdbd] py-[3px]">
            {group.map((item) => <ToolButton key={item[0]} item={item} className="h-[27px] w-[26px]" />)}
          </div>
        ))}
      </div>
      <div className="flex min-w-0 flex-1 flex-col">
        <div className="flex h-[28px] shrink-0 items-center border-b border-[#5a5a5a] bg-linear-to-b from-white to-[#f3f3f0]">
          <span className="mr-[6px] ml-[1px] h-4 border-l-2 border-dotted border-[#aaa]" />
          {TOOLBAR.map((group, i) => (
            <div key={i} className={`flex items-center ${i > 0 ? 'before:mx-[2px] before:h-4 before:w-[2px] before:border-l before:border-[#b5b5b5]' : ''}`}>
              {group.map((item) => <ToolButton key={item[0]} item={item} className="h-6 w-7" />)}
            </div>
          ))}
        </div>
        <div className="grid min-h-0 flex-1 grid-cols-[31px_minmax(0,1fr)] grid-rows-[minmax(0,1fr)_31px] overflow-hidden border-b border-l border-[#5a5a5a]">
          <VRuler />
          <Plan />
          <svg className="size-full" aria-hidden="true"><rect width="100%" height="100%" fill="#fff" /><path d="M5 0 V31 M13 0 V31 M21 0 V31 M0 6 H31 M0 15 H31 M0 23 H31" stroke="#c8c8cc" /></svg>
          <HRuler />
        </div>
      </div>
    </div>
    <div className="flex h-[28px] shrink-0 items-center pl-[3px] text-[11px]">
      <span className="flex h-6 w-[73px] items-center border-l border-[#777] pl-[6px] whitespace-pre">X:  -62</span>
      <span className="flex h-6 w-[73px] items-center border-x border-[#777] pl-[6px] whitespace-pre">Y:  20</span>
    </div>
  </section>
);

const DocTabs = () => (
  <div className="isolate flex h-[25px] shrink-0 items-end border-b border-[#b9c6d4] pl-[7px] text-[11px]">
    {DOC_TABS.map(({ name, skin, active }) => {
      const fill = active ? 'bg-white' : 'bg-[#f0f0f0]';
      return (
        <button key={name} type="button" className={`relative -ml-[6px] flex h-[17px] ${skin}`}>
          <span className={`h-full w-[14px] shrink-0 origin-bottom -skew-x-[38deg] rounded-tl border-t border-l border-[#b9c6d4] ${fill}`} />
          <span className={`relative flex h-full flex-1 items-center gap-1 overflow-hidden rounded-tr border-t border-r border-[#b9c6d4] pl-1 leading-[16px] whitespace-nowrap ${fill}`}>
            {active ? <svg width="10" height="12" viewBox="0 0 10 12" className="shrink-0" aria-hidden="true"><path d="M0 6 h10 v6 h-10z" fill="#c4552c" /><path d="M5 0 v7 M3 3 h4" stroke="#3a2a20" strokeWidth="2" /><path d="M0 9 h10" stroke="#6e2a18" /></svg> : <Gem />}
            {name}
          </span>
        </button>
      );
    })}
    <div className="mb-[7px] ml-auto flex items-center gap-[14px] pr-[7px]">
      <button type="button" aria-label="Список окон" className="flex flex-col items-center gap-px"><span className="h-px w-[11px] bg-black" /><span className="border-x-[5px] border-t-[5px] border-x-transparent border-t-black" /></button>
      <button type="button" disabled aria-label="Закрепить" className="text-[11px] leading-none font-bold text-[#bccad8]">+</button>
      <button type="button" aria-label="Закрыть"><Svg s={8}><path d="M1 1 L7 7 M7 1 L1 7" stroke="#000" strokeWidth="2" /></Svg></button>
    </div>
  </div>
);

/* ---------- soil table ---------- */

const HEAD = [
  '№\nИГЭ', 'Усл.\nобоз', 'Наименование грунта', 'Насы-\nпной\nгрунт', 'Цвет', 'Модуль\nдеформации,\nтс/м^2', 'Коэффициент\nПуассона',
  ['Удельный\nвес грунта,\nтс/м^3', 'γ I', 'γ II'],
  'Коэффициент\nперехода ко\n2 модулю\nдеформации', 'Природная\nвлажность,\nдоли', 'Показатель\nтекучести', 'Вода', 'Число\nпластич-\nности', 'Коэффициент\nпористости',
  ['Удельное\nсцепление,\nтс/м^2', 'c I', 'c II'],
  ['Угол\nвнутреннег\nо трения, °', 'φ I', 'φ II'],
  'Метод\nстатич.\nзондиро-\nвания', 'Коэффициент\nпропорцио-\nнальности\nК, тс/м^4', 'Тип грунта для свайного основания',
];

const SoilTable = () => (
  <div className="flex h-[246px] overflow-hidden border border-black bg-white">
    <div className="min-w-0 flex-1 overflow-hidden pl-px">
      <table className="w-full table-fixed border-separate border-spacing-0 text-[11px]">
        <colgroup>
          <col className="w-[30px]" /><col className="w-[35px]" /><col className="w-[190px]" /><col className="w-[60px]" /><col className="w-[36px]" />
          <col className="w-[82px]" /><col className="w-[80px]" /><col className="w-[40px]" /><col className="w-[40px]" /><col className="w-[80px]" />
          <col className="w-[74px]" /><col className="w-[74px]" /><col className="w-[36px]" /><col className="w-[60px]" /><col className="w-[80px]" />
          <col className="w-[37px]" /><col className="w-[37px]" /><col className="w-[37px]" /><col className="w-[37px]" /><col className="w-[45px]" />
          <col className="w-[82px]" /><col />
        </colgroup>
        <thead className="leading-[15px] [&_th]:overflow-hidden [&_th]:border-r [&_th]:border-[#e8eaf0] [&_th]:p-0 [&_th]:font-normal [&_th]:whitespace-pre">
          <tr className="h-[56px]">
            {HEAD.map((h, i) =>
              Array.isArray(h)
                ? <th key={i} colSpan={2}>{h[0]}</th>
                : <th key={i} rowSpan={2} className="text-left"><span className="block pl-[7px]">{h}</span></th>
            )}
          </tr>
          <tr className="h-[18px] font-['Liberation_Serif','Times_New_Roman',serif] text-[12px]">
            {HEAD.filter(Array.isArray).flatMap((h) => [<th key={h[1]}>{h[1]}</th>, <th key={h[2]}>{h[2]}</th>])}
          </tr>
        </thead>
        <tbody className="text-center [&_td]:h-[23px] [&_td]:border-r [&_td]:border-b [&_td]:border-[#a0a0a0] [&_td]:p-0 [&_td]:leading-[18px]">
          {SOILS.map(([name, fill, color, ...rest], i) => (
            <tr key={name} className={`${i === 0 ? 'bg-[#3399ff] text-white' : ''} ${i % 2 ? "font-['Liberation_Serif','Times_New_Roman',serif] text-[12px]" : ''}`}>
              <td>{i + 1}</td>
              <td />
              <td className="text-left whitespace-nowrap"><span className="pl-[3px]">{name}</span></td>
              <td><Check label={`Насыпной: ${name}`} defaultChecked={fill} /></td>
              <td style={{ backgroundColor: color }} />
              {rest.map((v, j) => (
                <td key={j}>{typeof v === 'boolean' ? <Check label={`Вода: ${name}`} defaultChecked={v} /> : v}</td>
              ))}
              <td><Check label={`Зондирование: ${name}`} /></td>
              <td>7647.9</td>
              <td><div className="h-[22px]"><GridSelect label={`Тип грунта: ${name}`} value={PILE_TYPE} className="font-['Liberation_Serif','Times_New_Roman',serif] text-[12px]" /></div></td>
            </tr>
          ))}
        </tbody>
      </table>
    </div>
    <div className="flex w-[17px] shrink-0 flex-col items-center bg-[#f0f0f0]">
      <span className="flex h-[17px] items-center"><ChevronUp size={12} strokeWidth={3} color="#444" /></span>
      <span className="h-[96px] w-[15px] bg-[#cdcdcd]" />
      <span className="mt-auto flex h-[17px] items-center"><ChevronDown size={12} strokeWidth={3} color="#444" /></span>
    </div>
  </div>
);

/* ---------- status bar ---------- */

const STATUS_TOOLS = [
  ['Сетка', <Svg s={18}><path d="M3 0 V18 M8 0 V18 M13 0 V18 M0 3 H17 M0 9 H17 M0 14 H17" stroke="#888" strokeDasharray="2 1" /></Svg>],
  ['Привязка', <Svg s={18}><circle cx="4" cy="8" r="3" stroke="#444" /><circle cx="10" cy="14" r="3" stroke="#444" /><path d="M7 8 H18 M10 11 V0" stroke="#444" strokeDasharray="3 1" /></Svg>],
  ['Ортогонально', <Svg s={18}><path d="M17 4 H5 V15 M2 12 L5 16 L8 12" stroke="#2a4a6a" strokeWidth="1.300" /></Svg>, true],
  ['Узел', <Svg s={18}><circle cx="9" cy="9" r="4" fill="#c4c4c4" stroke="#aaa" /></Svg>],
  ['Точка', <Svg s={18}><circle cx="9" cy="9" r="2" fill="#c4c4c4" stroke="#aaa" /></Svg>],
  ['Стрелки', <Svg s={18}><path d="M6 2 V8 M12 2 V8 M4 6 l2 3 2 -3 M10 6 l2 3 2 -3 M7 11 l-3 3 3 3 M13 11 l-3 3 3 3" stroke="#999" /></Svg>],
  ['Плоскость', <Svg s={20}><path d="M1 13 L8 4 H19 L13 13z" fill="#999" stroke="#555" /><path d="M1 13 H13 L19 4 V8 L13 17 H1z" fill="#666" /></Svg>],
];

const Caret = ({ dim }) => <span className={`border-x-[3px] border-t-4 border-x-transparent ${dim ? 'border-t-[#aaa]' : 'border-t-black'}`} />;

const StatusBar = () => (
  <footer className="flex h-7 shrink-0 items-center border-t border-[#d8d8d8] bg-[#f0f0f0] text-[11px]">
    <div className="flex items-center gap-[3px] pr-[5px] pl-[5px]">
      <button type="button" aria-label="Линейка" className="flex items-center gap-[2px]"><svg width="21" height="8" aria-hidden="true"><rect x=".5" y=".5" width="20" height="7" fill="#f0ac2c" stroke="#a86c10" /><path d="M4 1 v3 M8 1 v3 M12 1 v3 M16 1 v3" stroke="#6e4508" /></svg><Caret /></button>
      <button type="button" disabled aria-label="Тело" className="ml-1 flex items-center gap-[2px]"><Svg s={16}><path d="M2 6 L7 1 L15 3 L13 12 L4 15z" fill="#cacaca" stroke="#bbb" /></Svg><Caret dim /></button>
      <button type="button" disabled aria-label="Слои" className="flex items-center gap-[3px]"><Svg s={16}><rect x="6" y="2" width="9" height="9" fill="#ddd" stroke="#999" /><rect x="2" y="8" width="6" height="6" fill="#eee" stroke="#999" /></Svg><Caret dim /></button>
    </div>
    <div className="flex h-6 items-center gap-[3px] border-x border-[#999] pr-px pl-1">
      {STATUS_TOOLS.map(([name, icon, active]) => (
        <button key={name} type="button" aria-label={name} className={`flex size-[23px] items-center justify-center border ${active ? 'border-[#5a9fd4] bg-[#cfe4f7]' : 'border-[#dadada] bg-[#efefef]'}`}>{icon}</button>
      ))}
    </div>
    <div className="flex h-[26px] flex-1 items-center bg-white">
      <span className="flex-1 text-center">Исходные данные</span>
      <div className="flex h-[23px] [&>span]:flex [&>span]:items-center [&>span]:gap-1 [&>span]:border-l [&>span]:border-[#999] [&>span]:pl-1">
        <span className="w-[67px]">X:</span>
        <span className="w-[67px]">Y:</span>
        <span className="w-[67px]">Z:</span>
        <span className="w-[154px]">
          <Svg s={22}><path d="M11 12 V22 M11 12 V3" stroke="#d62828" strokeWidth="2" /><path d="M2 12 H22" stroke="#1d5fa8" strokeWidth="2" /><path d="M4 19 L18 5" stroke="#32a852" strokeWidth="2" /><circle cx="13" cy="11" r="4" fill="#f7d35a" /><Star x={4} y={4} r={4} color="#f5a020" /></Svg>
          96723/-/85738
        </span>
        <span className="w-[154px]">
          <Svg s={22}><path d="M11 1 H20 V15 H11z" fill="#8fe0a0" stroke="#2f9a4c" /><path d="M2 12 H12 V17 L4 22z" fill="#7cd590" stroke="#2f9a4c" /><path d="M14 21 L20 14" stroke="#2f9a4c" /><Star x={4} y={4} r={4} color="#f5a020" /></Svg>
          102808/-/92037
        </span>
        <span className="w-[154px]"><Svg s={22}><path d="M9 5 H20 L15 14 H21 V20 H3z" fill="#a9d2ea" stroke="#1d5f8e" /><Star x={4} y={4} r={4} color="#f5a020" /></Svg></span>
      </div>
    </div>
    <div className="h-6 w-[15px] border-l border-[#999]" />
  </footer>
);

const SidePanels = () => (
  <>
    <aside className="flex w-[19px] shrink-0 justify-center bg-[#a8abab] pt-[23px]">
      <button type="button" className="h-fit rotate-180 text-[13px] leading-[19px] font-bold whitespace-nowrap text-white [writing-mode:vertical-rl]">&lt;&lt; Контейнер активных режимов</button>
    </aside>
    <aside className="flex w-[33px] shrink-0 flex-col items-center gap-[6px] bg-linear-to-r from-white to-[#f6f4f4] pt-1 pr-1">
      <button type="button" className="flex items-center">
        <span className="rotate-180 text-[11px] leading-[16px] font-semibold whitespace-nowrap text-[#333] [writing-mode:vertical-rl]">Атрибуты представления</span>
        <span className="border-y-[3px] border-l-4 border-y-transparent border-l-black" />
      </button>
      <Svg s={24}><rect x="1" y="6" width="12" height="16" rx="1" fill="#5fb0dc" stroke="#1d6e9e" /><path d="M13 14 l5 -4 v8z" fill="#1d6e9e" /><path d="M19 1 l4 4 -4 4 -3 -4z M19 8 l4 4 -4 4 -3 -4z M19 15 l4 4 -4 4 -3 -4z" fill="#8fe0a0" stroke="#3cab5a" /></Svg>
      <Svg s={24}><path d="M3 4 V2 H21 V4 M3 20 V22 H21 V20" stroke="#1d6e9e" strokeWidth="2.500" /><rect x="6" y="5" width="12" height="14" stroke="#3a92c4" strokeWidth="1.500" /><path d="M9 8 h6 v3 h-6z M9 13 h6 v3 h-6z" stroke="#3a92c4" /></Svg>
      <Svg s={24}><rect x="3" y="1" width="18" height="22" stroke="#4a6a9a" strokeDasharray="1 2" /><path d="M9 3 h6 l3 4 -3 5 h-5 l-3 -5z" fill="#fff" stroke="#444" /><Star x={12} y={17} color="#e01515" /></Svg>
    </aside>
  </>
);

export default function App() {
  return (
    <div className="flex h-screen w-full flex-col overflow-hidden border-x-4 border-b-[3px] border-[#5a9fc4] bg-[#f0f0f0] font-['Noto_Sans','Open_Sans',sans-serif] text-black">
      <RibbonTabs />
      <Ribbon />
      <div className="flex min-h-0 flex-1">
        <SidePanels />
        <main className="ml-px flex min-w-0 flex-1 flex-col border-l border-[#b9c8d8]">
          <DocTabs />
          <div className="flex min-h-0 flex-1">
            <WellForm />
            <PlanView />
          </div>
          <section className="mr-1 ml-[2px] shrink-0 border-b border-[#b8bcc4]">
            <div className="border border-[#a8a8a8] bg-white px-[6px] pt-[6px] pb-[3px]">
              <SoilTable />
            </div>
            <div className="flex h-[24px] items-start text-[11px]">
              <button type="button" className="h-[23px] bg-white px-[7px]">Характеристики грунтов</button>
              <button type="button" className="mt-px h-[21px] border border-[#a0a0a0] bg-[#efefef] px-1">Разрез</button>
            </div>
          </section>
          <div className="h-1 shrink-0" />
        </main>
      </div>
      <StatusBar />
    </div>
  );
}
